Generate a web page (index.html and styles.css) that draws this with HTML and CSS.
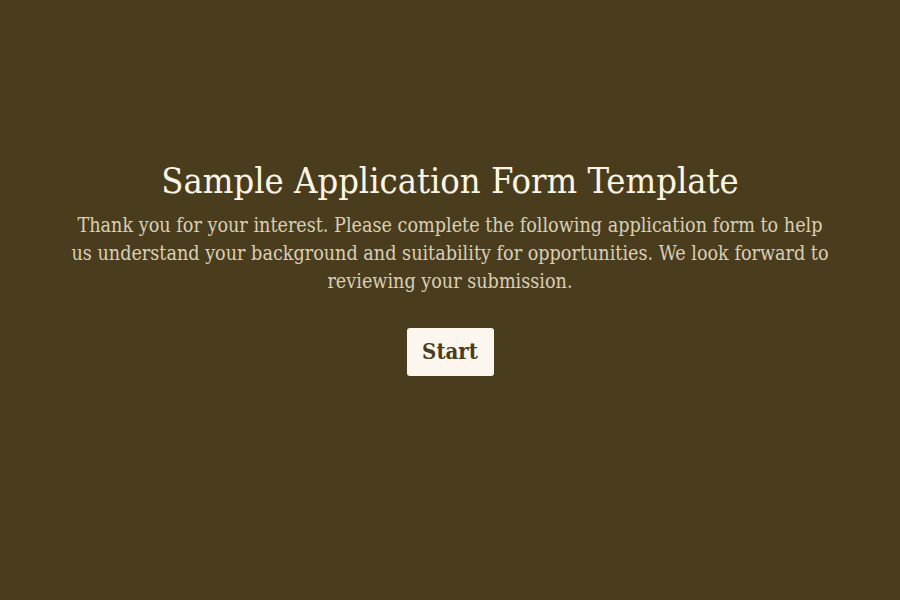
FILE: index.html
```html
<!DOCTYPE html>
<html lang="en">
<head>
<meta charset="utf-8">
<title>Sample Application Form Template</title>
<link rel="stylesheet" href="styles.css">
</head>
<body>
<main class="page">
  <section class="intro">
    <h1 class="title">Sample Application Form Template</h1>
    <p class="lead">Thank you for your interest. Please complete the following application form to help<br>us understand your background and suitability for opportunities. We look forward to<br>reviewing your submission.</p>
    <button class="start" type="button">Start</button>
  </section>
</main>
</body>
</html>
```
FILE: styles.css
```css
html, body {
  margin: 0;
  padding: 0;
  height: 100%;
}
body {
  background: #4a3d1e;
  font-family: "DejaVu Serif Condensed", "DejaVu Serif", serif;
}
.page {
  display: flex;
  justify-content: center;
  padding-top: 159px;
}
.intro {
  width: 800px;
  display: flex;
  flex-direction: column;
  align-items: center;
  text-align: center;
}
.title {
  margin: 0 0 9px;
  font-weight: normal;
  font-size: 36px;
  line-height: 44px;
  color: #fdf6e6;
}
.lead {
  margin: 0;
  font-size: 19.6px;
  line-height: 28px;
  color: #d9cfb8;
}
.start {
  margin-top: 32px;
  width: 87px;
  height: 48px;
  border: none;
  border-radius: 3px;
  background: #fcf6ee;
  color: #4a3d1e;
  font-family: inherit;
  font-weight: bold;
  font-size: 22px;
  line-height: 44px;
  padding: 0 0 3px;
}
```
